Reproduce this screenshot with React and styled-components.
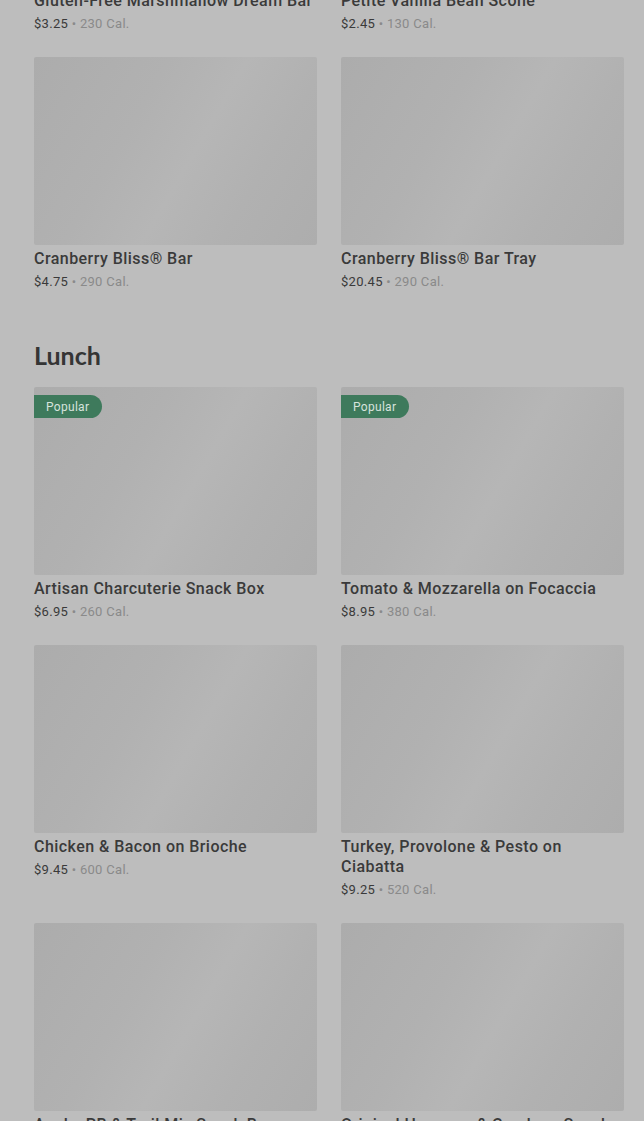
import React from 'react';
import styled, { createGlobalStyle } from 'styled-components';

const GlobalStyle = createGlobalStyle`
  html, body {
    margin: 0;
    padding: 0;
    background: #bdbdbd;
  }
  body {
    font-family: 'Roboto', 'Liberation Sans', sans-serif;
    overflow: hidden;
  }
`;

const Page = styled.div`
  height: 1121px;
  overflow: hidden;
  padding: 0 20px 0 34px;
  box-sizing: border-box;
`;

const Section = styled.section`
  margin-top: ${props => props.$offset || 0}px;
  margin-bottom: 47px;
`;

const Heading = styled.h2`
  margin: 0 0 16px;
  font-family: 'Lato', 'Liberation Sans', sans-serif;
  font-size: 25px;
  line-height: 32px;
  font-weight: 700;
  color: #353535;
`;

const Grid = styled.div`
  display: grid;
  grid-template-columns: 283px 283px;
  column-gap: 24px;
  row-gap: 23px;
`;

const Card = styled.div`
  display: flex;
  flex-direction: column;
`;

const Thumb = styled.div`
  position: relative;
  height: 188px;
  border-radius: 2px;
  background: linear-gradient(
    120deg,
    #acacac 0%,
    #b1b1b1 35%,
    #b6b6b6 55%,
    #b1b1b1 75%,
    #adadad 100%
  );
`;

const Badge = styled.span`
  position: absolute;
  top: 8px;
  left: 0;
  height: 23px;
  padding: 0 13px 0 12px;
  display: flex;
  align-items: center;
  background: #3e7a5c;
  color: #d6e3dc;
  font-size: 12px;
  letter-spacing: 0.3px;
  border-radius: 0 12px 12px 0;
`;

const Title = styled.div`
  margin-top: 4px;
  font-size: 16px;
  line-height: 20px;
  font-weight: 500;
  color: #3a3a3a;
  letter-spacing: 0.45px;
`;

const Meta = styled.div`
  margin-top: 3px;
  font-size: 13px;
  line-height: 20px;
  color: #3a3a3a;
  letter-spacing: 0.3px;
  span {
    color: #8a8a8a;
  }
`;

const Product = ({ name, price, cal, popular }) => (
  <Card>
    <Thumb>{popular && <Badge>Popular</Badge>}</Thumb>
    <Title>{name}</Title>
    <Meta>
      ${price} <span>• {cal} Cal.</span>
    </Meta>
  </Card>
);

const bakery = [
  { name: 'Gluten-Free Marshmallow Dream Bar', price: '3.25', cal: 230 },
  { name: 'Petite Vanilla Bean Scone', price: '2.45', cal: 130 },
  { name: 'Cranberry Bliss® Bar', price: '4.75', cal: 290 },
  { name: 'Cranberry Bliss® Bar Tray', price: '20.45', cal: 290 },
];

const lunch = [
  { name: 'Artisan Charcuterie Snack Box', price: '6.95', cal: 260, popular: true },
  { name: 'Tomato & Mozzarella on Focaccia', price: '8.95', cal: 380, popular: true },
  { name: 'Chicken & Bacon on Brioche', price: '9.45', cal: 600 },
  { name: 'Turkey, Provolone & Pesto on Ciabatta', price: '9.25', cal: 520 },
  { name: 'Apple, PB & Trail Mix Snack Box', price: '5.95', cal: 460 },
  { name: 'Original Hummus & Crackers Snack Box', price: '5.45', cal: 500 },
];

export default function App() {
  return (
    <>
      <GlobalStyle />
      <Page>
        <Section $offset={-201}>
          <Grid>
            {bakery.map(p => (
              <Product key={p.name} {...p} />
            ))}
          </Grid>
        </Section>
        <Section>
          <Heading>Lunch</Heading>
          <Grid>
            {lunch.map(p => (
              <Product key={p.name} {...p} />
            ))}
          </Grid>
        </Section>
      </Page>
    </>
  );
}
